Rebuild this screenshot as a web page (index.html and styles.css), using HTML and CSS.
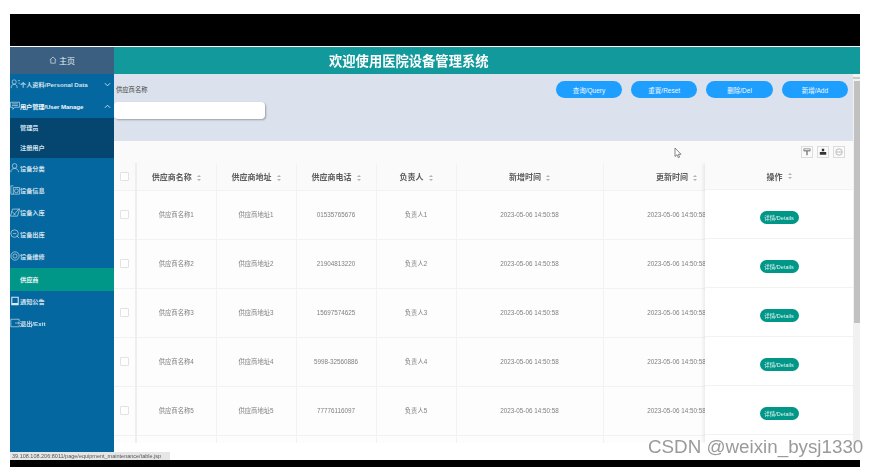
FILE: index.html
```html
<!DOCTYPE html>
<html lang="zh-CN">
<head>
    <meta charset="UTF-8">
    <title>医院设备管理系统</title>
    <link rel="stylesheet" href="styles.css">
</head>
<body>
    <div class="shot">
        <div class="black-top"></div>
        <div class="app">
            <aside class="sidebar">
                <div class="home">
                    <svg class="home-icon" viewBox="0 0 10 10"><path d="M1 5 5 1.200 9 5M2.200 4.200V9h5.600V4.200"/></svg>
                    主页
                </div>
                <div class="menu-item">
                    <svg class="menu-icon" viewBox="0 0 12 12"><circle cx="5" cy="3.500" r="2.500"/><path d="M1.500 11V9.500C1.500 7.500 3 6.500 5 6.500s3.500 1 3.500 3V11M9.500 2H12M10 5h2"/></svg>
                    <span class="menu-label">个人资料/Personal Data</span>
                    <svg class="caret" viewBox="0 0 8 8"><path d="M1 2.500 4 5.500 7 2.500"/></svg>
                </div>
                <div class="menu-item strong">
                    <svg class="menu-icon" viewBox="0 0 12 10"><path d="M.5.500h11v6h-6L3.500 9V6.500h-3zM2.500 2.500h7M2.500 4.500h7"/></svg>
                    <span class="menu-label tight">用户管理/User Manage</span>
                    <svg class="caret" viewBox="0 0 8 8"><path d="M1 5.500 4 2.500 7 5.500"/></svg>
                </div>
                <div class="submenu">
                    <div class="sub-item">管理员</div>
                    <div class="sub-item">注册用户</div>
                </div>
                <div class="menu-item">
                    <svg class="menu-icon" viewBox="0 0 12 12"><circle cx="5.500" cy="3.500" r="2.800"/><path d="M1 11c0-3 2-4.500 4.500-4.500S10 8 10.500 11"/></svg>
                    <span class="menu-label">设备分类</span>
                </div>
                <div class="menu-item">
                    <svg class="menu-icon" viewBox="0 0 12 12"><path d="M4 1H1v10h3M4 3h7.500v8H4z"/><circle cx="7.700" cy="7" r="2.300"/></svg>
                    <span class="menu-label">设备信息</span>
                </div>
                <div class="menu-item">
                    <svg class="menu-icon" viewBox="0 0 12 12"><path d="M.5 11 3 2.500h8.500L9 11zM2 5l5 5M4 10l7-8"/></svg>
                    <span class="menu-label">设备入库</span>
                </div>
                <div class="menu-item">
                    <svg class="menu-icon" viewBox="0 0 12 12"><circle cx="5.500" cy="5.500" r="4.500"/><path d="m8 8 3 3M3.500 5.500h4"/></svg>
                    <span class="menu-label">设备出库</span>
                </div>
                <div class="menu-item">
                    <svg class="menu-icon" viewBox="0 0 12 12"><circle cx="6" cy="6" r="5"/><circle cx="6" cy="6" r="2.500"/></svg>
                    <span class="menu-label">设备维修</span>
                </div>
                <div class="sub-item active">供应商</div>
                <div class="menu-item">
                    <svg class="menu-icon solid" viewBox="0 0 12 12"><path d="M1.500 1h9v10h-9zM2.800 2.200v6.300h6.400V2.200z" fill-rule="evenodd"/></svg>
                    <span class="menu-label">通知公告</span>
                </div>
                <div class="menu-item">
                    <svg class="menu-icon" viewBox="0 0 12 12"><path d="M11 4V1.500H1v9h10V8M6 6h5.500M9.500 4.500 11.500 6l-2 1.500"/></svg>
                    <span class="menu-label">退出/Exit</span>
                </div>
            </aside>

            <div class="main">
                <header class="title-bar"><h1>欢迎使用医院设备管理系统</h1></header>
                <div class="body-wrap">
                    <div class="content">
                        <section class="search">
                            <div class="search-left">
                                <label class="search-label">供应商名称</label>
                                <input class="search-input" type="text">
                            </div>
                            <div class="search-buttons">
                                <button class="btn">查询/Query</button>
                                <button class="btn">重置/Reset</button>
                                <button class="btn">删除/Del</button>
                                <button class="btn">新增/Add</button>
                            </div>
                        </section>

                        <div class="toolbar">
                            <span class="tool"><svg viewBox="0 0 10 10"><path d="M1 1h8v2.500H1zM1 3.500h3.500v5.500M9 3.500H5.500v5.500"/></svg></span>
                            <span class="tool"><svg class="solid" viewBox="0 0 10 10"><path d="M3.500 1h3v3h-3zM1 5h8v3.500H1z"/></svg></span>
                            <span class="tool faint"><svg viewBox="0 0 10 10"><circle cx="5" cy="5" r="4"/><path d="M2 5h6"/></svg></span>
                        </div>

                        <div class="grid">
                            <div class="grid-scroll">
                                <table class="data">
                                    <colgroup>
                                        <col class="c-check">
                                        <col class="c-normal"><col class="c-normal"><col class="c-normal"><col class="c-normal">
                                        <col class="c-time"><col class="c-time">
                                    </colgroup>
                                    <thead>
                                        <tr>
                                            <th class="check-cell"><span class="checkbox"></span></th>
                                            <th>供应商名称<span class="sort"></span></th>
                                            <th>供应商地址<span class="sort"></span></th>
                                            <th>供应商电话<span class="sort"></span></th>
                                            <th>负责人<span class="sort"></span></th>
                                            <th>新增时间<span class="sort"></span></th>
                                            <th>更新时间<span class="sort"></span></th>
                                        </tr>
                                    </thead>
                                    <tbody>
                                        <tr>
                                            <td class="check-cell"><span class="checkbox"></span></td>
                                            <td>供应商名称1</td><td>供应商地址1</td><td>01535765676</td><td>负责人1</td>
                                            <td>2023-05-06 14:50:58</td><td>2023-05-06 14:50:58</td>
                                        </tr>
                                        <tr>
                                            <td class="check-cell"><span class="checkbox"></span></td>
                                            <td>供应商名称2</td><td>供应商地址2</td><td>21904813220</td><td>负责人2</td>
                                            <td>2023-05-06 14:50:58</td><td>2023-05-06 14:50:58</td>
                                        </tr>
                                        <tr>
                                            <td class="check-cell"><span class="checkbox"></span></td>
                                            <td>供应商名称3</td><td>供应商地址3</td><td>15697574625</td><td>负责人3</td>
                                            <td>2023-05-06 14:50:58</td><td>2023-05-06 14:50:58</td>
                                        </tr>
                                        <tr>
                                            <td class="check-cell"><span class="checkbox"></span></td>
                                            <td>供应商名称4</td><td>供应商地址4</td><td>5998-32560886</td><td>负责人4</td>
                                            <td>2023-05-06 14:50:58</td><td>2023-05-06 14:50:58</td>
                                        </tr>
                                        <tr>
                                            <td class="check-cell"><span class="checkbox"></span></td>
                                            <td>供应商名称5</td><td>供应商地址5</td><td>77776116097</td><td>负责人5</td>
                                            <td>2023-05-06 14:50:58</td><td>2023-05-06 14:50:58</td>
                                        </tr>
                                        <tr>
                                            <td class="check-cell"></td>
                                            <td></td><td></td><td></td><td></td><td></td><td></td>
                                        </tr>
                                    </tbody>
                                </table>
                            </div>
                            <div class="grid-fixed">
                                <div class="fixed-head">操作<span class="sort"></span></div>
                                <div class="fixed-row"><button class="detail">详情/Details</button></div>
                                <div class="fixed-row"><button class="detail">详情/Details</button></div>
                                <div class="fixed-row"><button class="detail">详情/Details</button></div>
                                <div class="fixed-row"><button class="detail">详情/Details</button></div>
                                <div class="fixed-row"><button class="detail">详情/Details</button></div>
                            </div>
                        </div>
                    </div>
                    <div class="scrollbar">
                        <div class="scroll-arrow"></div>
                        <div class="scroll-thumb"></div>
                    </div>
                </div>
            </div>
        </div>
        <div class="black-bottom"></div>

        <div class="status-tip">39.108.108.206:8011/page/equipment_maintenance/table.jsp</div>
        <svg class="cursor" viewBox="0 0 8 12"><path d="M1 1v8.500l2-1.800 1.300 3 1.300-.6-1.300-2.800H7z"/></svg>
        <div class="watermark">CSDN @weixin_bysj1330</div>
    </div>
</body>
</html>
```

FILE: styles.css
```css
* {
    box-sizing: border-box;
}

html, body {
    margin: 0;
    height: 467px;
    overflow: hidden;
    background: #fff;
}

body {
    font-family: "Liberation Sans", "Noto Sans CJK SC", sans-serif;
}

.shot {
    position: relative;
    width: 850px;
    height: 467px;
    margin-left: 10px;
    padding-top: 14px;
    display: flex;
    flex-direction: column;
}

.black-top {
    height: 32px;
    background: #000;
    flex: none;
}

.app {
    margin-top: 1px;
    flex: 1;
    min-height: 0;
    display: flex;
    filter: blur(.35px); /* the reference is a soft, scaled-down capture */
}

.black-bottom {
    height: 7px;
    background: #000;
    flex: none;
}

/* sidebar */
.sidebar {
    width: 104px;
    flex: none;
    background: #05679f;
    color: #cfe0ec;
    font-size: 6.200px;
    font-weight: bold;
}

.home {
    height: 27px;
    background: #3a5f80;
    color: #e8eef4;
    font-size: 8px;
    font-weight: normal;
    display: flex;
    align-items: center;
    justify-content: center;
    gap: 2px;
    padding-bottom: 1px;
}

.home-icon {
    width: 8px;
    height: 8px;
    fill: none;
    stroke: #e8eef4;
    stroke-width: .8;
}

.menu-item {
    height: 22px;
    padding-bottom: 2px;
    display: flex;
    align-items: center;
}

.menu-item.strong {
    color: #f2f7fb;
}

.menu-icon {
    width: 10px;
    height: 10px;
    flex: none;
    fill: none;
    stroke: #cfe0ec;
    stroke-width: .8;
}

.menu-icon.solid {
    fill: #dbe9f3;
    stroke: none;
}

.menu-label {
    flex: 1;
    white-space: nowrap;
}

.menu-label.tight {
    letter-spacing: -.1px;
}

.caret {
    width: 7px;
    height: 7px;
    margin-right: 3px;
    flex: none;
    fill: none;
    stroke: #dbe9f3;
    stroke-width: 1;
}

.submenu {
    background: #04466f;
    height: 40px;
}

.sub-item {
    height: 20px;
    padding-left: 10px;
    line-height: 20px;
}

.sub-item.active {
    height: 23px;
    line-height: 23px;
    background: #009688;
    color: #e6f5f3;
}

/* right side */
.main {
    flex: 1;
    min-width: 0;
    display: flex;
    flex-direction: column;
}

.title-bar {
    height: 27px;
    flex: none;
    background: #12999b;
    padding-left: 215px;
    display: flex;
    align-items: center;
}

.title-bar h1 {
    margin: 0;
    font-size: 13.300px;
    color: #fff;
    font-weight: bold;
}

.body-wrap {
    height: 369px;
    flex: none;
    display: flex;
}

.content {
    width: 739px;
    flex: none;
    overflow: hidden;
    display: flex;
    flex-direction: column;
}

.search {
    height: 67px;
    flex: none;
    background: #dbe2ed;
    display: flex;
    justify-content: space-between;
    padding-top: 7px;
}

.search-left {
    display: flex;
    flex-direction: column;
    align-items: flex-start;
}

.search-label {
    margin: 4px 0 0 2px;
    font-size: 6.300px;
    line-height: 9px;
    color: #444;
}

.search-input {
    width: 151px;
    height: 17px;
    margin-top: 8px;
    border: none;
    border-radius: 4px;
    background: #fff;
    box-shadow: 1px 1px 2px rgba(0, 0, 0, .3);
}

.search-buttons {
    display: flex;
    gap: 9px;
    padding-right: 5px;
}

.btn {
    width: 66.300px;
    height: 17px;
    padding: 0;
    border: none;
    border-radius: 9px;
    background: #1e9fff;
    color: #f0f8ff;
    font: 6.500px "Liberation Sans", "Noto Sans CJK SC", sans-serif;
}

.toolbar {
    height: 22px;
    flex: none;
    background: #fafafa;
    display: flex;
    justify-content: flex-end;
    align-items: center;
    gap: 4px;
    padding-right: 8px;
}

.tool {
    width: 12px;
    height: 12px;
    border: 1px solid #dcdcdc;
    display: flex;
    align-items: center;
    justify-content: center;
}

.tool svg {
    width: 8px;
    height: 8px;
    fill: none;
    stroke: #666;
    stroke-width: .8;
}

.tool svg.solid {
    fill: #333;
    stroke: none;
}

.tool.faint svg {
    stroke: #999;
}

/* table */
.grid {
    flex: 1;
    min-height: 0;
    display: flex;
    overflow: hidden;
}

.grid-scroll {
    width: 591px;
    flex: none;
    overflow: hidden;
}

.data {
    width: 636px;
    table-layout: fixed;
    border-collapse: collapse;
}

.c-check { width: 22px; }
.c-normal { width: 80px; }
.c-time { width: 147px; }

.data th {
    height: 27px;
    padding: 0;
    background: #fafafa;
    border: 1px solid #f2f2f2;
    border-top: none;
    font-size: 8px;
    font-weight: bold;
    color: #5c5c5c;
    white-space: nowrap;
    overflow: hidden;
}

.data td {
    height: 49px;
    padding: 0;
    background: #fdfdfd;
    border: 1px solid #f2f2f2;
    text-align: center;
    font-size: 6.300px;
    color: #808080;
    white-space: nowrap;
    overflow: hidden;
}

.data .check-cell {
    border-right: 2px solid #eeeeee;
    border-left: none;
}

.checkbox {
    display: inline-block;
    width: 9px;
    height: 9px;
    vertical-align: middle;
    background: #fff;
    border: 1px solid #e2e2e2;
    border-radius: 1px;
}

/* two small arrows, one above the other */
.sort {
    display: inline-block;
    width: 4px;
    height: 6px;
    margin-left: 5px;
    vertical-align: middle;
    position: relative;
}

.sort::before,
.sort::after {
    content: "";
    position: absolute;
    left: 0;
    border-left: 2px solid transparent;
    border-right: 2px solid transparent;
}

.sort::before {
    top: 0;
    border-bottom: 2.500px solid #b2b2b2;
}

.sort::after {
    bottom: 0;
    border-top: 2.500px solid #b2b2b2;
}

.grid-fixed {
    flex: 1;
    background: #fff;
    box-shadow: -2px 0 3px rgba(0, 0, 0, .07);
    position: relative;
}

.fixed-head {
    height: 27px;
    background: #fafafa;
    border-bottom: 1px solid #f2f2f2;
    display: flex;
    align-items: center;
    justify-content: center;
    font-size: 8px;
    font-weight: bold;
    color: #5c5c5c;
}

.fixed-row {
    height: 49px;
    border-bottom: 1px solid #f2f2f2;
    display: flex;
    justify-content: center;
    padding-top: 21px;
}

.detail {
    width: 39px;
    height: 13px;
    padding: 0;
    border: none;
    border-radius: 7px;
    background: #009688;
    color: #e6f5f3;
    font: 5.500px "Liberation Sans", "Noto Sans CJK SC", sans-serif;
}

.scrollbar {
    width: 7px;
    flex: none;
    background: #f1f1f1;
}

.scroll-arrow {
    height: 7px;
    background: linear-gradient(to top, #f1f1f1 2px, #c9c9c9 2px, #c9c9c9 4px, #f1f1f1 4px);
}

.scroll-thumb {
    width: 6px;
    height: 242px;
    background: #c1c1c1;
    margin-left: 1px;
}

/* things lying over the picture */
.status-tip {
    position: absolute;
    left: 0;
    top: 452px;
    width: 160px;
    height: 8px;
    padding-left: 2px;
    background: #e6e6e6;
    color: #555;
    font-size: 5.500px;
    line-height: 8px;
    white-space: nowrap;
    filter: blur(.3px);
}

.cursor {
    position: absolute;
    left: 664px;
    top: 147px;
    width: 8px;
    height: 12px;
    fill: #fff;
    stroke: #555;
    stroke-width: .7;
}

.watermark {
    position: absolute;
    left: 638px;
    top: 436px;
    font-size: 18.800px;
    line-height: 22px;
    color: #9a9a9a;
    white-space: nowrap;
    text-shadow: 0 0 1px #fff;
}
```
